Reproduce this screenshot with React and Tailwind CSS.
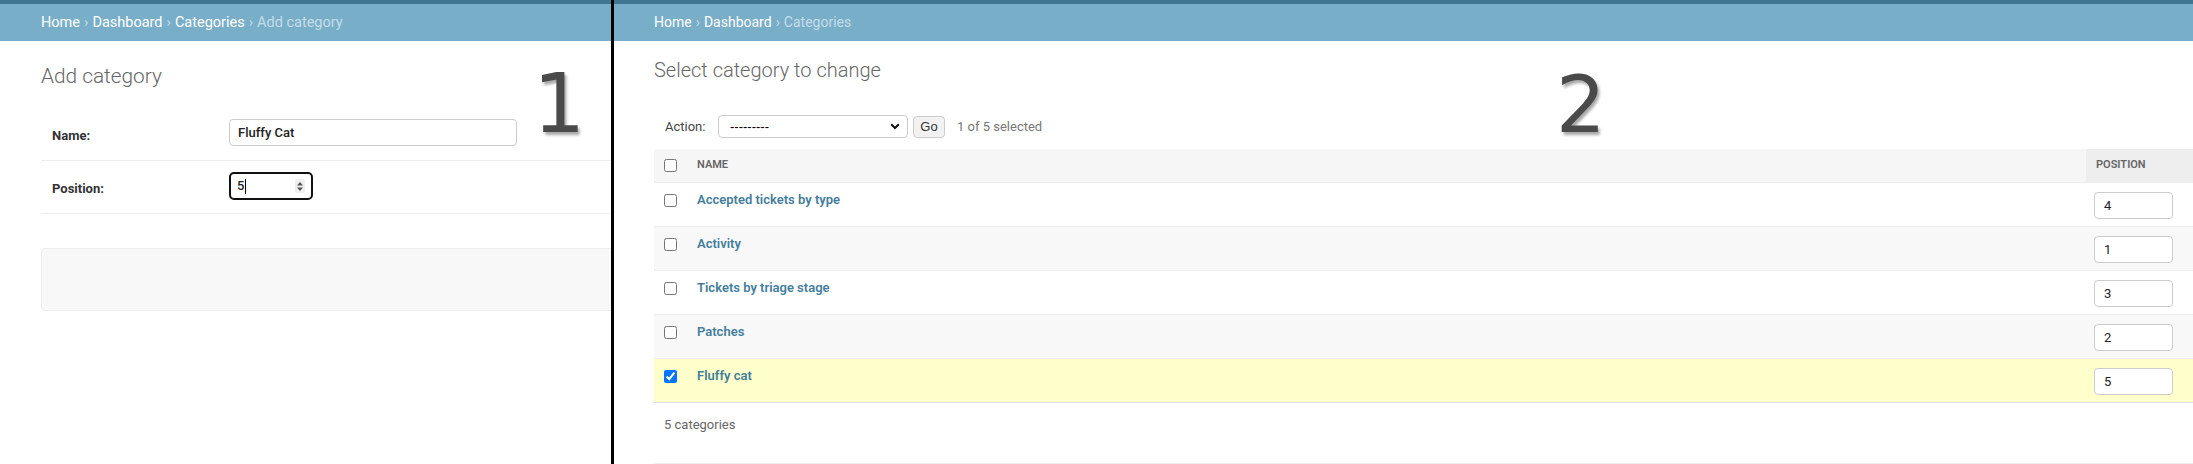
import React from "react";

function Crumbs({ items, size }) {
  return (
    <div className={"h-[37px] bg-[#79aec8] flex items-center text-[#c4dce8] whitespace-nowrap " + size}>
      {items.map((it, i) => (
        <React.Fragment key={i}>
          {i > 0 && <span className="px-[4px]">›</span>}
          <span className={it.link ? "text-white" : "text-[#c4dce8]"}>{it.label}</span>
        </React.Fragment>
      ))}
    </div>
  );
}

function Checkbox({ checked }) {
  return (
    <input
      type="checkbox"
      defaultChecked={checked}
      className="m-0 w-[13px] h-[13px] block"
    />
  );
}

const rows = [
  { name: "Accepted tickets by type", pos: "4" },
  { name: "Activity", pos: "1" },
  { name: "Tickets by triage stage", pos: "3" },
  { name: "Patches", pos: "2" },
  { name: "Fluffy cat", pos: "5", selected: true },
];

export default function App() {
  return (
    <div className="flex w-[2193px] h-[464px] bg-white overflow-hidden font-[Roboto,'Liberation_Sans',sans-serif] text-[#333]">
      {/* Left panel */}
      <div className="relative w-[611px] shrink-0 overflow-hidden">
        <div className="h-[4px] bg-[#417690]" />
        <div className="pl-[41px] bg-[#79aec8]">
          <Crumbs
            size="text-[14.5px]"
            items={[
              { label: "Home", link: true },
              { label: "Dashboard", link: true },
              { label: "Categories", link: true },
              { label: "Add category" },
            ]}
          />
        </div>
        <div className="pl-[41px] pt-[21px] w-[900px]">
          <h1 className="text-[20.8px] leading-[28px] font-light text-[#666]">Add category</h1>
          <div className="mt-[18px]">
            <div className="h-[53px] border-b border-[#eee] flex items-start pl-[11px] pt-[11px]">
              <label className="w-[177px] pt-[9px] text-[13px] leading-[16px] font-bold text-[#333]">Name:</label>
              <div className="w-[288px] h-[27px] border border-[#ccc] rounded-[4px] pl-[8px] flex items-center text-[13px] font-medium text-[#222]">
                Fluffy Cat
              </div>
            </div>
            <div className="h-[53px] border-b border-[#eee] flex items-start pl-[11px] pt-[11px]">
              <label className="w-[177px] pt-[9px] text-[13px] leading-[16px] font-bold text-[#333]">Position:</label>
              <div className="w-[84px] h-[28px] border-2 border-[#111] rounded-[5px] pl-[6px] pr-[6px] flex items-center justify-between text-[13px] font-medium text-[#222]">
                <div className="flex items-center">
                  <span>5</span>
                  <span className="w-px h-[15px] bg-black ml-px" />
                </div>
                <div className="w-[10px] h-[14px] bg-[#efefef] rounded-[2px] flex items-center justify-center">
                  <svg width="8" height="11" viewBox="0 0 8 11">
                    <path d="M4 1 L7 4.5 L1 4.5 Z" fill="#555" />
                    <path d="M4 10 L7 6.5 L1 6.5 Z" fill="#555" />
                  </svg>
                </div>
              </div>
            </div>
          </div>
          <div className="mt-[34px] h-[63px] bg-[#f8f8f8] border border-[#eee] rounded-[4px]" />
        </div>
        <span className="absolute left-[533px] top-[63px] text-[82px] leading-none text-[#4a4a4a] font-['DejaVu_Sans',sans-serif] [text-shadow:2px_3px_3px_rgba(0,0,0,0.35)]">
          1
        </span>
      </div>

      {/* Divider */}
      <div className="w-[3px] shrink-0 bg-black" />

      {/* Right panel */}
      <div className="relative flex-1 overflow-hidden">
        <div className="h-[4px] bg-[#417690]" />
        <div className="pl-[40px] bg-[#79aec8]">
          <Crumbs
            size="text-[14px]"
            items={[
              { label: "Home", link: true },
              { label: "Dashboard", link: true },
              { label: "Categories" },
            ]}
          />
        </div>
        <div className="pl-[40px] pt-[15px]">
          <h1 className="text-[20px] leading-[28px] font-light text-[#666]">Select category to change</h1>
          <div className="mt-[21px] h-[44px] pt-[10px] pl-[11px] flex items-start text-[13px]">
            <span className="w-[53px] leading-[23px] text-[#444]">Action:</span>
            <div className="w-[190px] h-[23px] border border-[#ccc] rounded-[4px] flex items-center justify-between pl-[11px] pr-[7px] bg-white">
              <span className="font-['Liberation_Sans',sans-serif] text-[13px] text-black">---------</span>
              <svg width="10" height="7" viewBox="0 0 10 7">
                <path d="M1.2 1.2 L5 5 L8.8 1.2" fill="none" stroke="#111" strokeWidth="2" />
              </svg>
            </div>
            <div className="ml-[5px] mt-px w-[32px] h-[22px] border border-[#ccc] bg-[#f2f2f2] rounded-[4px] flex items-center justify-center text-[13px] text-[#333] font-['Liberation_Sans',sans-serif]">
              Go
            </div>
            <span className="ml-[12px] leading-[23px] text-[#777]">1 of 5 selected</span>
          </div>

          <div className="w-[1539px]">
            <div className="flex h-[34px] bg-[#f6f6f6] border-b border-[#eee] text-[11px] font-semibold uppercase text-[#666]">
              <div className="w-[43px] pl-[10px] flex items-center">
                <Checkbox />
              </div>
              <div className="flex-1 flex items-center">Name</div>
              <div className="w-[107px] bg-[#eeeeee] pl-[10px] flex items-center">Position</div>
            </div>
            {rows.map((r, i) => (
              <div
                key={r.name}
                className={
                  "flex h-[44px] border-b " +
                  (i === rows.length - 1 ? "border-[#ddd] " : "border-[#eee] ") +
                  (r.selected ? "bg-[#ffffcc]" : i % 2 === 1 ? "bg-[#f8f8f8]" : "bg-white")
                }
              >
                <div className="w-[43px] pl-[10px] pt-[11px]">
                  <Checkbox checked={r.selected} />
                </div>
                <div className="flex-1 pt-[9px] text-[13px] leading-[16px] font-semibold text-[#447e9b]">{r.name}</div>
                <div className="w-[107px] pl-[8px] pt-[9px]">
                  <div className="w-[79px] h-[27px] border border-[#ccc] rounded-[4px] bg-white pl-[9px] flex items-center text-[13px] font-normal text-[#222]">
                    {r.pos}
                  </div>
                </div>
              </div>
            ))}
            <div className="h-[61px] border-b border-[#eee] pl-[10px] pt-[14px] text-[13px] leading-[16px] text-[#666]">
              5 categories
            </div>
          </div>
        </div>
        <span className="absolute left-[942px] top-[66px] text-[78px] leading-none text-[#4a4a4a] font-['DejaVu_Sans',sans-serif] [text-shadow:2px_3px_3px_rgba(0,0,0,0.35)]">
          2
        </span>
      </div>
    </div>
  );
}
